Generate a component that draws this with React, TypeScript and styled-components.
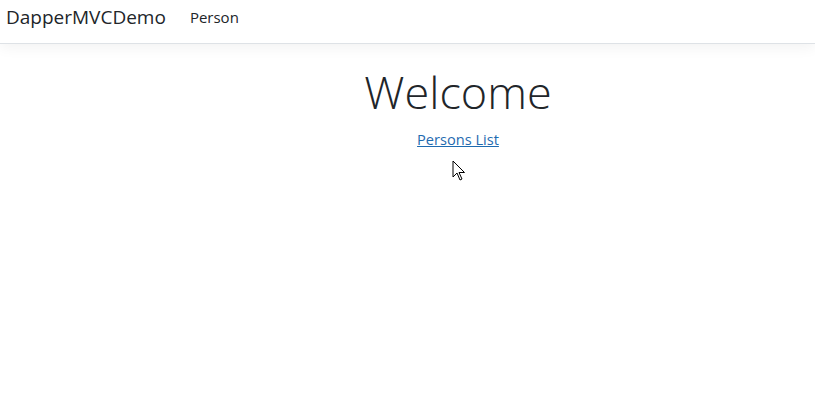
import React from "react";
import styled, { createGlobalStyle } from "styled-components";

const GlobalStyle = createGlobalStyle`
  html, body {
    margin: 0;
    padding: 0;
    background: #ffffff;
    font-family: "Open Sans", "Noto Sans", sans-serif;
    color: #212529;
  }
`;

const Page = styled.div`
  position: relative;
  width: 815px;
  height: 419px;
  overflow: hidden;
  background: #fff;
`;

const NavBar = styled.header`
  display: flex;
  align-items: center;
  height: 44px;
  box-sizing: border-box;
  padding: 0 6px;
  border-bottom: 1px solid #dee2e6;
  box-shadow: 0 4px 14px rgba(0, 0, 0, 0.05);
`;

const Brand = styled.a`
  font-size: 19px;
  color: #212529;
  text-decoration: none;
  margin-right: 24px;
  margin-top: -9px;
`;

const NavLink = styled.a`
  font-size: 15px;
  color: #212529;
  text-decoration: none;
  margin-top: -9px;
`;

const Main = styled.main`
  display: flex;
  flex-direction: column;
  align-items: center;
  padding-top: 21px;
  padding-left: 101px;
`;

const Title = styled.h1`
  margin: 0;
  font-size: 45px;
  font-weight: 300;
  line-height: 1.2;
  color: #212529;
`;

const ListLink = styled.a`
  margin-top: 10px;
  font-size: 14.6px;
  color: #1f6bb0;
  text-decoration: underline;
`;

const Cursor = styled.svg`
  position: absolute;
  left: 452px;
  top: 160px;
`;

export default function App() {
  return (
    <Page>
      <GlobalStyle />
      <NavBar>
        <Brand href="#">DapperMVCDemo</Brand>
        <NavLink href="#">Person</NavLink>
      </NavBar>
      <Main>
        <Title>Welcome</Title>
        <ListLink href="#">Persons List</ListLink>
      </Main>
      <Cursor width="14" height="22" viewBox="0 0 14 22">
        <path
          d="M1 1 L1 17 L5 13 L8 20 L10 19 L7 12.5 L12.5 12.5 Z"
          fill="#fff"
          stroke="#000"
          strokeWidth="1"
          strokeLinejoin="miter"
        />
      </Cursor>
    </Page>
  );
}
